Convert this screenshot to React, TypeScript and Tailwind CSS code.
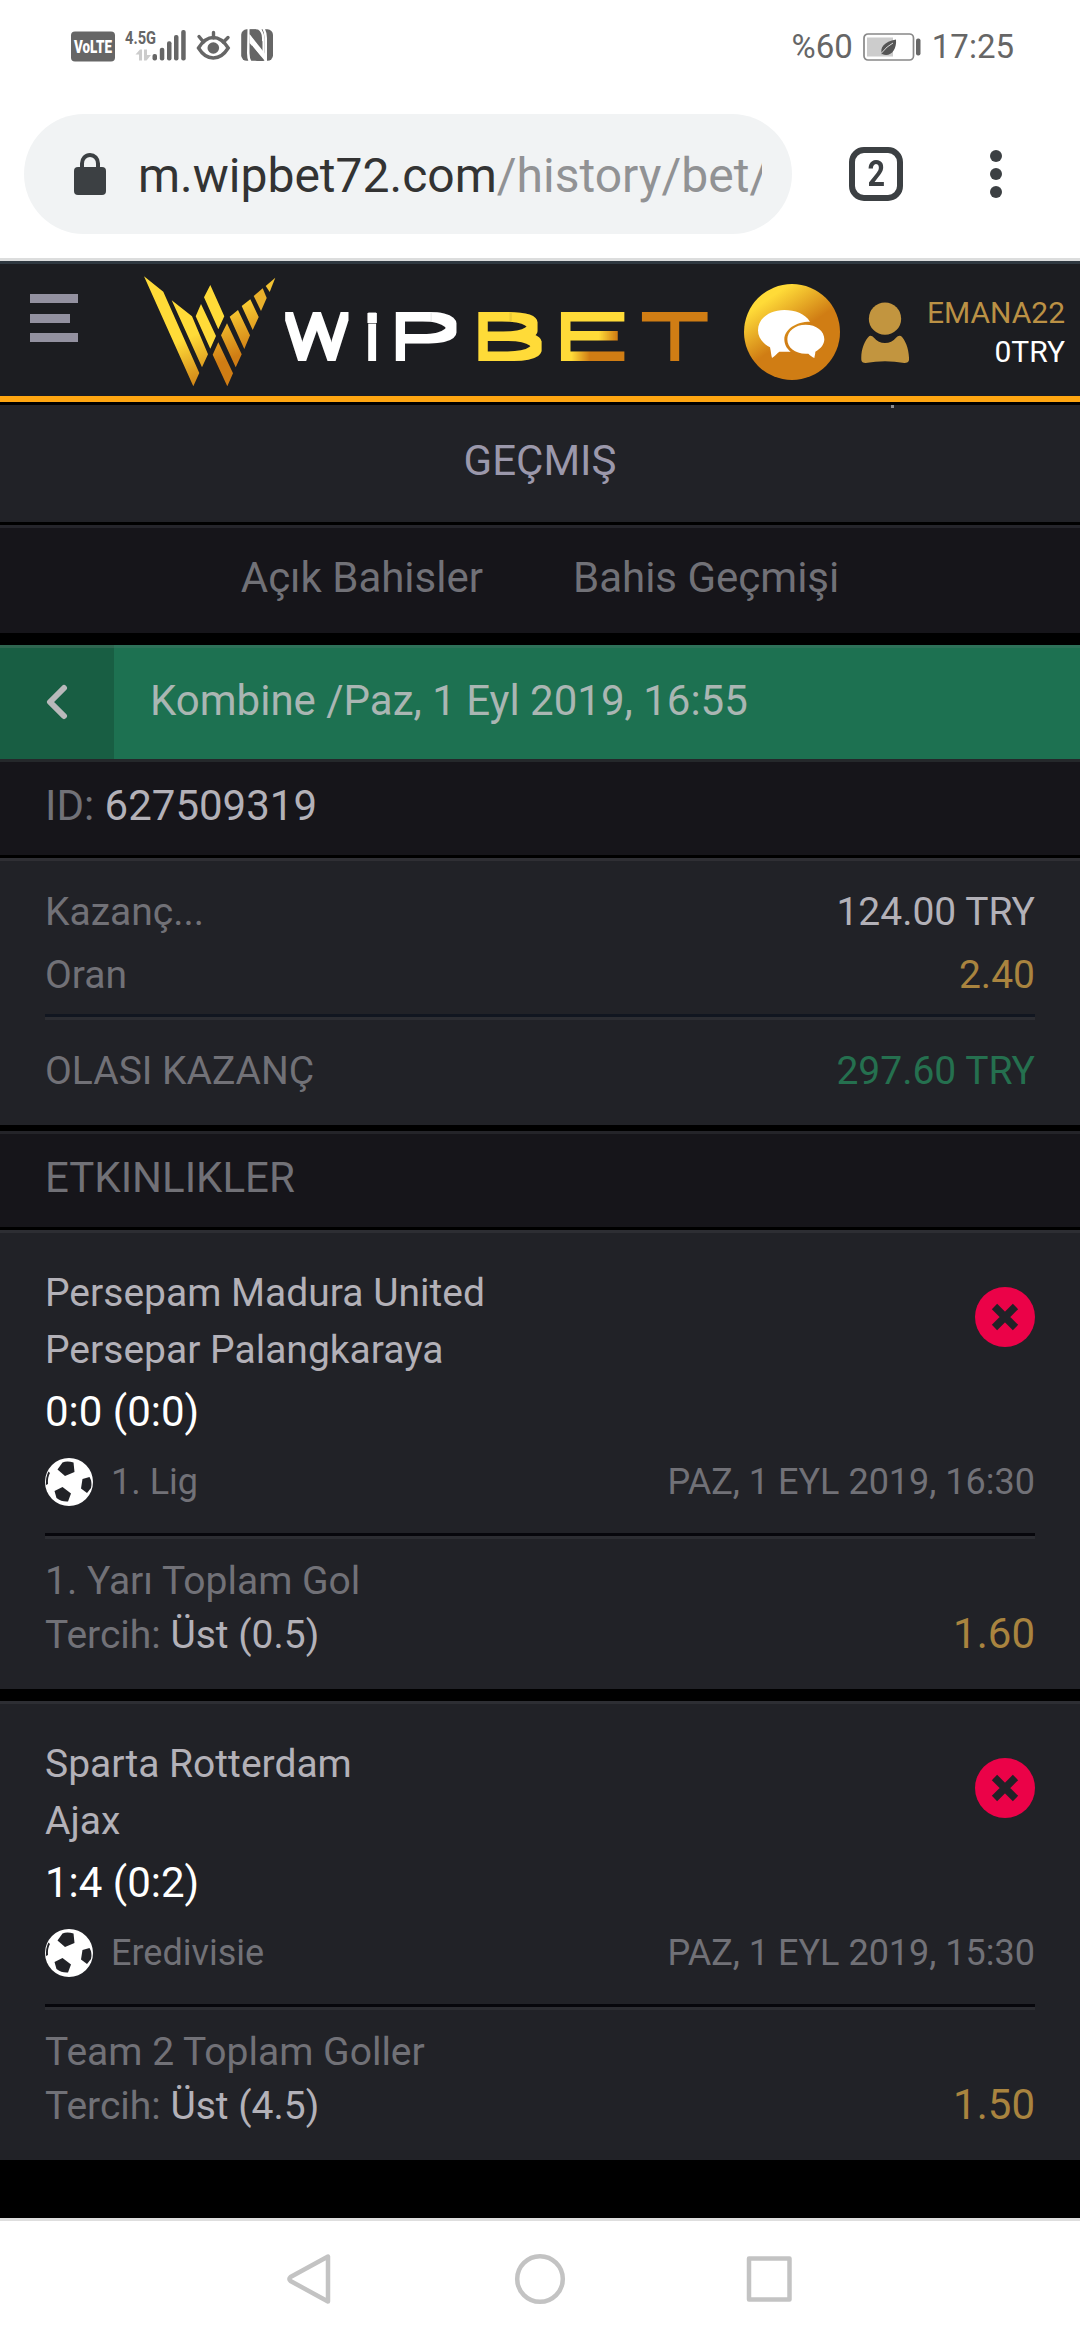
type Match = {
   home: string,
   away: string,
   score: string,
   league: string,
   date: string,
   market: string,
   pick: string,
   odds: string
}

const matches: Match[] = [
   {
      home: 'Persepam Madura United',
      away: 'Persepar Palangkaraya',
      score: '0:0 (0:0)',
      league: '1. Lig',
      date: 'PAZ, 1 EYL 2019, 16:30',
      market: '1. Yarı Toplam Gol',
      pick: 'Üst (0.5)',
      odds: '1.60'
   },
   {
      home: 'Sparta Rotterdam',
      away: 'Ajax',
      score: '1:4 (0:2)',
      league: 'Eredivisie',
      date: 'PAZ, 1 EYL 2019, 15:30',
      market: 'Team 2 Toplam Goller',
      pick: 'Üst (4.5)',
      odds: '1.50'
   }
]

const StatusIcons = () => (
   <svg width="206" height="49" viewBox="70 22 206 49" fill="#666">
      <rect x="71" y="31.500" width="44" height="30" rx="4" />
      <text x="74" y="53" fontSize="19" fontWeight="900" fill="#fff" textLength="38" lengthAdjust="spacingAndGlyphs">VoLTE</text>
      <text x="125" y="43.500" fontSize="19" fontWeight="700" textLength="31" lengthAdjust="spacingAndGlyphs">4.5G</text>
      <path d="M135.500 54.500L140 49.500L142 49.500L142 60.500L139 60.500L139 54.500ZM144 49.500L147 49.500L147 55L151 55L146.500 60.500L144 60.500Z" fill="#ccc" />
      <rect x="152.500" y="54" width="4.500" height="6.500" rx="2" />
      <rect x="159.800" y="47.700" width="4.500" height="12.800" rx="2" />
      <rect x="167" y="41.300" width="4.500" height="19.200" rx="2" />
      <rect x="174" y="35" width="4.500" height="25.500" rx="2" />
      <rect x="181.200" y="30" width="4.500" height="30.500" rx="2" />
      <path d="M198.500 48Q205 37.500 213.300 37.500T228.200 48Q222 58 213.300 58T198.500 48Z" fill="none" stroke="#666" strokeWidth="3.400" />
      <circle cx="213.300" cy="48" r="5.800" />
      <path d="M199 36.500L203.500 42M213.500 32.500V38M228 37.500L223.500 42" stroke="#666" strokeWidth="3.400" strokeLinecap="round" />
      <rect x="241.200" y="29.300" width="31.800" height="31.500" rx="5.500" />
      <path d="M247.500 29L249.500 29L249.500 53Q249.500 58 251.500 61.500L248.500 61.500Q247 58 247 53Z" fill="#fff" />
      <path d="M249.500 34.500L262.500 52V41.500L256 31L256.500 29H261.500Q264.500 34 264.500 39V58L250 42Z" fill="#fff" />
      <path d="M249.500 34V43L265 61V53.500Z" fill="#fff" />
      <path d="M252.500 35L262 47.500V38Q262 32 258 29.500H250Z" fill="#666" />
      <path d="M252 45.500V52Q252 58 257 61H264Z" fill="#666" />
      <path d="M262.500 29H265Q267 33 267 38V61.500H264.500V38Q264.500 33 262.500 29Z" fill="#fff" />
   </svg>
)

const StatusBar = () => (
   <div className="flex h-[93px] items-center justify-between pl-[70px] pr-[66px] text-[33px] leading-[39px] text-[#666]">
      <StatusIcons />
      <div className="flex items-center gap-2.5">
         <span>%60</span>
         <svg width="59" height="28" viewBox="0 0 59 28">
            <rect x="1" y="1" width="49.500" height="26" rx="4" fill="none" stroke="#888" strokeWidth="1.700" />
            <rect x="4" y="4.500" width="26" height="19" fill="#ccc" />
            <path d="M19 22C16.500 14 21 9 33 6.500C34 17 27 25 19 21Z" fill="#555" />
            <path d="M18.500 20Q24 13 30 10" stroke="#ddd" strokeWidth="1" fill="none" />
            <rect x="53" y="5.500" width="4.500" height="17" rx="2" fill="#666" />
         </svg>
         <span>17:25</span>
      </div>
   </div>
)

const BrowserBar = () => (
   <div className="flex h-[168px] items-start border-b-[3px] border-[#dcdddd] pl-6 pt-[21px] text-[#3c4043]">
      <div className="flex h-[120px] w-[768px] items-center rounded-full bg-[#f1f3f4] pl-[50px] pr-[30px]">
         <svg className="shrink-0" width="32" height="42" viewBox="0 0 32 42" fill="#3c4043">
            <path d="M8 16V10.500A8 8.500 0 0 1 24 10.500V16" fill="none" stroke="#3c4043" strokeWidth="4" />
            <rect y="14" width="32" height="28" rx="4" />
         </svg>
         <div className="ml-8 flex-1 overflow-hidden whitespace-nowrap pt-[3px] text-[48px] leading-[60px] text-[#333]">
            m.wipbet72.com<span className="text-[#919294]">/history/bet/</span>
         </div>
      </div>
      <div className="ml-[57px] mt-[33px] flex size-[54px] items-center justify-center rounded-[15px] border-[6px] border-[#3c4043] text-[36px] font-bold leading-none">
         <span className="scale-x-[.85]">2</span>
      </div>
      <div className="ml-[87px] mt-9 flex flex-col gap-1.5">
         <i className="size-3 rounded-full bg-[#3c4043]" />
         <i className="size-3 rounded-full bg-[#3c4043]" />
         <i className="size-3 rounded-full bg-[#3c4043]" />
      </div>
   </div>
)

type LetterProps = {
   x: number,
   scale: string,
   color: string,
   children: string
}

// hairline glyph widened by the scale, the "thicken" filter gives it an even weight
const Letter = ({ x, scale, color, children }: LetterProps) => (
   <text transform={`translate(${x} 356.500) scale(${scale})`} fill={color}>{children}</text>
)

const Logo = () => (
   <svg width="570" height="114" viewBox="142 274 570 114" fontSize="57.700" fontWeight="100">
      <defs>
         <linearGradient id="left" gradientUnits="userSpaceOnUse" x1="170" y1="345" x2="190" y2="392">
            <stop stopColor="#ffdb38" />
            <stop offset="1" stopColor="#cb7c14" />
         </linearGradient>
         <linearGradient id="right" gradientUnits="userSpaceOnUse" x1="232" y1="300" x2="252" y2="350">
            <stop stopColor="#ffd838" />
            <stop offset="1" stopColor="#d07d14" />
         </linearGradient>
         <linearGradient id="letter" gradientUnits="userSpaceOnUse" x1="20" y1="-22" x2="26" y2="-18.600">
            <stop stopColor="#ffdb38" />
            <stop offset="1" stopColor="#d07d14" />
         </linearGradient>
         <filter id="thicken" filterUnits="userSpaceOnUse" x="270" y="290" width="442" height="90" colorInterpolationFilters="sRGB">
            <feMorphology operator="dilate" radius="3 4" />
         </filter>
      </defs>
      <path fill="#ffdb38" d="M201 304L216 336L210.300 348.700L195.700 316.300ZM210.300 285L224.300 316.300L218.300 329.300L204 297.300Z" />
      <path fill="url(#left)" d="M144 276.300L163.300 291.700L199.300 373L193.300 386.300ZM171.700 300.300L192 316.300L208 354.300L202 367.300Z" />
      <path fill="url(#right)" d="M218.300 342.300L233 373.300L227.300 386.300L212.700 354.700ZM227 323.300L241.700 354.300L235.700 367.300L221 335.300ZM238 310L250 335.300L244.300 349L229.700 316.700ZM250.300 299.300L258.700 317L252.700 330L241.700 306Z" />
      <path fill="#e9b02b" d="M262.700 288.300L266.700 298L261 311L253.700 296Z" />
      <path fill="#f3c332" d="M275.300 277.700L269.700 292L265.700 286Z" />
      <g filter="url(#thicken)">
         <Letter x={286} scale="1.18 1" color="#fff">W</Letter>
         <Letter x={365} scale="1.2 .95" color="#fff">i</Letter>
         <Letter x={387} scale="2.1 1" color="#fff">P</Letter>
         <Letter x={469} scale="2.2 1" color="#ffdb38">B</Letter>
         <Letter x={551} scale="2.300 1" color="url(#letter)">E</Letter>
         <Letter x={642} scale="1.900 1" color="#d07d14">T</Letter>
      </g>
   </svg>
)

const ChatIcon = () => (
   <svg width="96" height="96" viewBox="72 87 288 288">
      <defs>
         <linearGradient id="chat" gradientUnits="userSpaceOnUse" x1="140" y1="135" x2="215" y2="245">
            <stop stopColor="#ffdb38" />
            <stop offset="1" stopColor="#d07d14" />
         </linearGradient>
      </defs>
      <circle cx="216" cy="231" r="144" fill="url(#chat)" />
      <path d="M270 200C255 176 225 165 193 165C148 165 114 191 114 226C114 248 128 265 150 277C153 290 153 300 156 309C165 303 170 296 178 290H212C200 281 193 268 193 253C193 223 228 200 270 200Z" fill="#fff" />
      <path d="M257 209C289 209 313 228 313 253C313 268 303 281 286 290C286 297 284 303 283 309C276 306 272 302 265 296C228 299 202 280 202 253C202 228 226 209 257 209Z" fill="#fff" />
   </svg>
)

const SiteHeader = () => (
   <div className="flex h-[141px] items-start border-b-[6px] border-t-[3px] border-b-[#ffa611] border-t-[#2f3840] bg-[#1c1d21] pl-[30px] pr-[15px]">
      <div className="mt-[30px] flex w-12 flex-col gap-[10.500px]">
         <i className="h-[9px] bg-[#9391a0]" />
         <i className="h-[9px] w-10 bg-[#9391a0]" />
         <i className="h-[9px] bg-[#9391a0]" />
      </div>
      <div className="ml-16 mt-2.5">
         <Logo />
      </div>
      <div className="ml-8 mt-5">
         <ChatIcon />
      </div>
      <svg className="ml-[21px] mt-[38px]" width="48" height="62" viewBox="423 141 144 186" fill="#c2953f">
         <circle cx="495" cy="191" r="48.500" />
         <path d="M448 243Q455 240 462 248Q475 264 495 264T528 248Q535 240 543 243C556 254 568 285 567 315Q566 324 553 324Q495 313 437 324Q425 324 424 315C422 285 434 256 448 243Z" />
      </svg>
      <div className="mt-[29px] flex flex-1 flex-col text-right text-[30px] leading-[39px] text-white">
         <span className="text-[#bb9145]">EMANA22</span>
         <span>0TRY</span>
      </div>
   </div>
)

const Ball = () => (
   <svg width="48" height="48" viewBox="0 0 48 48">
      <circle cx="24" cy="24" r="24" fill="#fff" />
      <g fill="#212227">
         <path d="M17.500 4.500Q22 2.500 28.500 4.500L29.500 14L20 18L12.500 11.500Z" />
         <path d="M17.500 29L26 35.500L23 43.500Q16.500 44 11.500 40L9.500 33Z" />
         <path d="M44.500 19Q47.500 24 46 30L42 35L36 30.500L37.500 21Z" />
         <path d="M3.500 13.500Q0.500 19 1 27L3 26Q2.500 19 5 15Z" />
      </g>
   </svg>
)

const Divider = ({ className }: { className?: string }) => (
   <div className={`${className} h-1.5 border-b-[3px] border-[#2c2d32]`} />
)

const Row = ({ label, value, color }: { label: string, value: string, color: string }) => (
   <div className="flex justify-between text-[39px] leading-[63px] text-[#717177]">
      <span>{label}</span>
      <span className={color}>{value}</span>
   </div>
)

const MatchCard = ({ home, away, score, league, date, market, pick, odds }: Match) => (
   <div className="h-[459px] border-t-[3px] border-[#2d2e33] bg-[#212227] px-[45px] pt-8 text-[39px] text-[#717177]">
      <div className="flex justify-between">
         <div className="flex flex-col leading-[57px] text-[#b3b1b8]">
            <span>{home}</span>
            <span>{away}</span>
            <span className="pt-px text-[42px] leading-[63px] text-white">{score}</span>
         </div>
         <svg className="mt-[22px]" width="60" height="60" viewBox="0 0 60 60">
            <circle cx="30" cy="30" r="30" fill="#eb0248" />
            <path d="M19.500 19.500L40.500 40.500M40.500 19.500L19.500 40.500" stroke="#212227" strokeWidth="7.500" />
         </svg>
      </div>
      <div className="mt-[15px] flex items-center text-[36px] leading-[48px]">
         <Ball />
         <span className="ml-[18px] flex-1">{league}</span>
         <span>{date}</span>
      </div>
      <Divider className="mt-[27px] bg-[#07070c]" />
      <div className="mt-[15px] leading-[54px]">{market}</div>
      <div className="flex items-baseline justify-between leading-[54px]">
         <span>Tercih: <span className="text-[#b3b1b8]">{pick}</span></span>
         <span className="text-[42px] leading-[48px] text-[#a9843f]">{odds}</span>
      </div>
   </div>
)

const NavBar = () => (
   <div className="h-[122px] border-t-[3px] border-[#dedede] bg-white">
      <svg width="1080" height="116" viewBox="0 2221 1080 116" fill="none" stroke="#c3c3c3" strokeWidth="4.500" strokeLinejoin="round">
         <path d="M328 2256.500V2301.500L290.500 2281Q288.500 2279 290.500 2277Z" />
         <circle cx="540" cy="2279" r="22.800" />
         <rect x="749" y="2258.500" width="40.500" height="41" />
      </svg>
   </div>
)

const App = () => (
   <div className="flex h-[2340px] w-[1080px] flex-col overflow-hidden bg-white font-['Roboto',sans-serif]">
      <StatusBar />
      <BrowserBar />
      <SiteHeader />
      <div className="flex flex-1 flex-col bg-black">
         <div className="h-[123px] border-b-[3px] border-t-[3px] border-black bg-[#212227] text-center text-[42px] leading-[105px] text-[#9b98ab]">
            <i className="ml-[891px] block size-[3px] bg-[#8a8a8e]" />
            GEÇMIŞ
         </div>
         <div className="flex h-[108px] justify-center gap-[90px] border-t-[3px] border-[#25252b] bg-[#16151a] text-[42px] leading-[99px] text-[#717177]">
            <span>Açık Bahisler</span>
            <span>Bahis Geçmişi</span>
         </div>
         <div className="mt-3 flex h-[114px] bg-[#1d7151] text-[42px] text-[#aab6b3]">
            <div className="flex w-[114px] items-center justify-center border-t-[3px] border-[#2f6650] bg-[#185e43] pb-1">
               <svg width="22" height="36" viewBox="0 0 22 36" fill="none" stroke="#b9b9bb" strokeWidth="6" strokeLinecap="round" strokeLinejoin="round">
                  <path d="M18 4L4 18L18 32" />
               </svg>
            </div>
            <div className="flex-1 border-t-[3px] border-[#2e7259] pl-9 leading-[105px]">Kombine /Paz, 1 Eyl 2019, 16:55</div>
         </div>
         <div className="h-[96px] border-t-[3px] border-[#25282b] bg-[#16151a] px-[45px] text-[42px] leading-[87px] text-[#717177]">
            ID: <span className="text-[#b3b1b8]">627509319</span>
         </div>
         <div className="mt-[3px] h-[267px] border-t-[3px] border-[#2f2f34] bg-[#212227] px-[45px] pt-5">
            <Row label="Kazanç..." value="124.00 TRY" color="text-[#b3b1b8]" />
            <Row label="Oran" value="2.40" color="text-[#a9843f]" />
            <Divider className="mb-5 mt-[7px] bg-[#111620]" />
            <Row label="OLASI KAZANÇ" value="297.60 TRY" color="text-[#25704f]" />
         </div>
         <div className="mb-[3px] mt-1.5 h-[96px] border-t-[3px] border-[#242429] bg-[#16151a] px-[45px] text-[42px] leading-[87px] text-[#717177]">ETKINLIKLER</div>
         <div className="flex flex-col gap-3">
            {
               matches.map(m => (
                  <MatchCard key={m.home} {...m} />
               ))
            }
         </div>
      </div>
      <NavBar />
   </div>
)

export default App;
